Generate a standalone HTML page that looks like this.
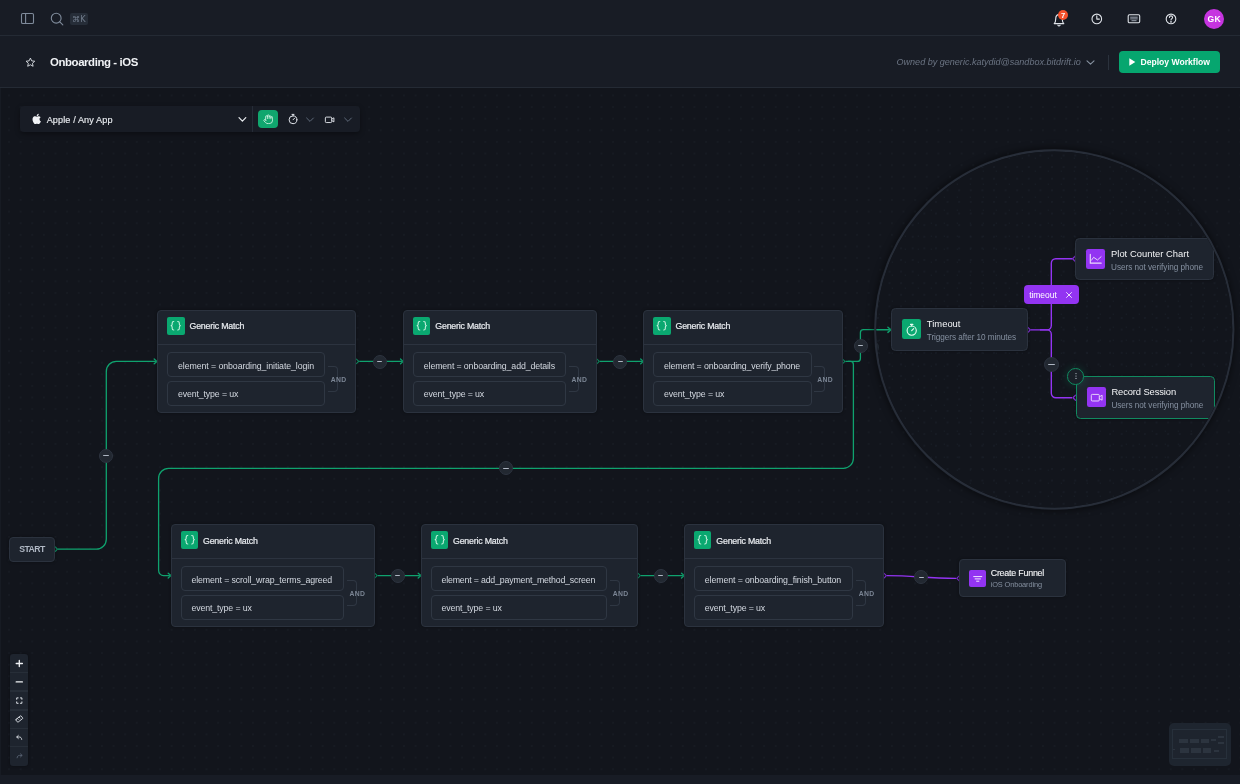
<!DOCTYPE html>
<html lang="en">
<head>
<meta charset="utf-8">
<title>Onboarding - iOS</title>
<style>
*{box-sizing:border-box;margin:0;padding:0}
html,body{width:1240px;height:784px;overflow:hidden;background:#12151c;font-family:"Liberation Sans",sans-serif;color:#e6e9ee}
.abs{position:absolute}
#topbar{position:absolute;left:0;top:0;width:1240px;height:36px;background:#181c25;border-bottom:1px solid #242a34}
#header{position:absolute;left:0;top:36px;width:1240px;height:52px;background:#181c25;border-bottom:1px solid #242a34}
#canvas{position:absolute;left:0;top:88px;width:1240px;height:687px;background-color:#12151c;
 overflow:hidden}
#bottom{position:absolute;left:0;top:775px;width:1240px;height:9px;background:#181c25}
.t{position:absolute;white-space:nowrap;line-height:1}
#topbar,#header,#scene{will-change:transform}
/* nodes */
.node{position:absolute;background:#1e242e;border:1px solid #2b323e;border-radius:4px;box-shadow:0 0 3px rgba(0,0,0,.4)}
.node .hd{position:absolute;left:0;right:0;top:0;height:34px;border-bottom:1px solid #2c333f}
.ico{position:absolute;border-radius:2px;background:#10a66e}
.ico.p{background:#9334f2}
.cond{position:absolute;border:1px solid #2f3743;border-radius:4px;background:#1e242e}
.title{position:absolute;white-space:nowrap;font-size:8.8px;line-height:10px;color:#e9ecf0}
.ctext{position:absolute;white-space:nowrap;font-size:8.8px;line-height:10px;color:#d5dae1}
.and{position:absolute;white-space:nowrap;font-size:6.6px;line-height:8px;font-weight:bold;color:#7b8594;letter-spacing:.2px}
.brk{position:absolute;border:1px solid #2f3743;border-left:none;border-radius:0 4px 4px 0}
.minus{position:absolute;width:14px;height:14px;border-radius:50%;background:#252c37;border:1px solid #2b323e}
.minus:after{content:"";position:absolute;left:3.5px;top:5.4px;width:5px;height:1.3px;background:#b4bcc8;border-radius:.5px}
</style>
</head>
<body>
<div id="topbar">
<svg class="abs" style="left:20px;top:12px" width="16" height="14" viewBox="0 0 16 14" fill="none" stroke="#7f8b9b" stroke-width="1.1"><rect x="1.5" y="1.5" width="12" height="10" rx="1.3"/><path d="M5.6 1.5v10"/></svg>
<svg class="abs" style="left:50px;top:12px" width="15" height="15" viewBox="0 0 15 15" fill="none" stroke="#7f8b9b" stroke-width="1.1" stroke-linecap="round"><circle cx="6.2" cy="6.2" r="4.9"/><path d="M9.8 9.8l3 3"/></svg>
<div class="abs" style="left:69.5px;top:12.5px;width:18.5px;height:12.5px;background:#262d38;border-radius:2px"></div>
<div class="t" style="left:72px;top:14.6px;font-size:8.2px;color:#6f7a8a;font-family:'DejaVu Sans','Liberation Sans',sans-serif">⌘K</div>
<svg class="abs" style="left:1051px;top:11px" width="18" height="18" viewBox="0 0 18 18" fill="none" stroke="#dfe3e9" stroke-width="1.15" stroke-linejoin="round" stroke-linecap="round"><path d="M3.2 12.6c1.1-1 1.5-2.2 1.5-4.6 0-2.6 1.4-4.4 3.3-4.4s3.300 1.8 3.300 4.400c0 2.400.4 3.600 1.500 4.600z"/><path d="M6.900 14.200c.3.500.700.700 1.100.7s.8-.2 1.100-.7"/></svg>
<div class="abs" style="left:1058px;top:10.300px;width:10px;height:10px;border-radius:50%;background:#f5512c"></div>
<div class="t" style="left:1060.900px;top:12.200px;font-size:7.600px;font-weight:bold;color:#fff">7</div>
<svg class="abs" style="left:1090px;top:12px" width="14" height="14" viewBox="0 0 14 14" fill="none" stroke="#dfe3e9" stroke-width="1.1" stroke-linecap="round" stroke-linejoin="round"><circle cx="6.800" cy="6.900" r="4.800"/><path d="M6.800 3.900v3.200h2.600"/></svg>
<svg class="abs" style="left:1126px;top:12px" width="16" height="14" viewBox="0 0 16 14" fill="none" stroke="#dfe3e9" stroke-width="1.100"><rect x="2.200" y="2.800" width="11.500" height="8" rx="1.200"/><path d="M4.200 5.200h7.500M4.200 6.900h7.500M5.500 8.700h5" stroke-width=".9" stroke="#aab2be"/></svg>
<svg class="abs" style="left:1164px;top:12px" width="14" height="14" viewBox="0 0 14 14" fill="none" stroke="#dfe3e9" stroke-width="1.100" stroke-linecap="round"><circle cx="7" cy="6.900" r="4.800"/><path d="M5.400 5.500c0-1 .7-1.600 1.600-1.600s1.600.6 1.600 1.500c0 1.100-1.600 1.300-1.600 2.500"/><circle cx="7" cy="9.800" r=".35" fill="#dfe3e9"/></svg>
<div class="abs" style="left:1204px;top:9px;width:20px;height:20px;border-radius:50%;background:#c634e0"></div>
<div class="t" style="left:1207.600px;top:14.600px;font-size:8.600px;font-weight:bold;color:#fff;letter-spacing:.2px">GK</div>
</div>
<div id="header">
<svg class="abs" style="left:25.1px;top:20.7px" width="10.8" height="10.8" viewBox="0 0 12 12" fill="none" stroke="#dfe3e9" stroke-width="1" stroke-linejoin="round"><path d="M6 1.200l1.450 3.100 3.350.4-2.500 2.300.7 3.300L6 8.650 3 10.300l.7-3.300-2.500-2.300 3.350-.4z"/></svg>
<div class="t" id="ttl" style="left:50px;top:20.6px;font-size:11.4px;letter-spacing:-.4px;font-weight:bold;color:#f1f3f6">Onboarding - iOS</div>
<div class="t" id="own" style="left:896.500px;top:22.2px;font-size:9.05px;font-style:italic;color:#6b7483">Owned by generic.katydid@sandbox.bitdrift.io</div>
<svg class="abs" style="left:1085px;top:22px" width="11" height="9" viewBox="0 0 11 9" fill="none" stroke="#8893a2" stroke-width="1.100" stroke-linecap="round" stroke-linejoin="round"><path d="M2 2.800l3.500 3.300L9 2.800"/></svg>
<div class="abs" style="left:1108px;top:19px;width:1px;height:14.5px;background:#2b323d"></div>
<div class="abs" style="left:1119px;top:15px;width:101px;height:22px;border-radius:4px;background:#06a66f"></div>
<svg class="abs" style="left:1128px;top:21px" width="9" height="10" viewBox="0 0 9 10"><path d="M1.300 1.200l6 3.800-6 3.800z" fill="#fff"/></svg>
<div class="t" id="dep" style="left:1140.500px;top:22.3px;font-size:8.6px;font-weight:bold;color:#fff">Deploy Workflow</div>
</div>
<div id="canvas"><svg width="1240" height="687" style="position:absolute;left:0;top:0"><defs><pattern id="dots" x="3.22" y="1.65" width="11.617" height="11.617" patternUnits="userSpaceOnUse"><circle cx="5.8085" cy="5.8085" r="0.62" fill="#1e242d"/></pattern></defs><rect width="1240" height="687" fill="url(#dots)"/></svg></div>
<div id="bottom"></div>
<div class="abs" style="left:0;top:88px;width:1px;height:687px;background:#171b23"></div>
<div id="scene" style="position:absolute;left:0;top:0;width:1240px;height:775px;overflow:hidden">
<!--EDGES-->
<svg class="abs" style="left:0;top:0" width="1240" height="775" viewBox="0 0 1240 775"><path d="M58 549.2H96.300a10 10 0 0 0 10-10V371.400a10 10 0 0 1 10-10H156.500" stroke="#0fa26e" stroke-width="1.3" fill="none"/>
<path d="M55.2 546.9L57.5 549.2L55.2 551.5" stroke="#0fa26e" stroke-width="1.1" fill="none" stroke-linecap="round" stroke-linejoin="round" opacity=".85"/>
<path d="M154.2 359.0L157.0 361.4L154.2 363.8" stroke="#0fa26e" stroke-width="1.3" fill="none" stroke-linecap="round" stroke-linejoin="round"/>
<path d="M359.2 361.4H402.8" stroke="#0fa26e" stroke-width="1.3" fill="none"/>
<path d="M356.4 359.1L358.7 361.4L356.4 363.7" stroke="#0fa26e" stroke-width="1.1" fill="none" stroke-linecap="round" stroke-linejoin="round" opacity=".85"/>
<path d="M400.5 359.0L403.3 361.4L400.5 363.8" stroke="#0fa26e" stroke-width="1.3" fill="none" stroke-linecap="round" stroke-linejoin="round"/>
<path d="M599.8 361.4H643.0" stroke="#0fa26e" stroke-width="1.3" fill="none"/>
<path d="M597.0 359.1L599.3 361.4L597.0 363.7" stroke="#0fa26e" stroke-width="1.1" fill="none" stroke-linecap="round" stroke-linejoin="round" opacity=".85"/>
<path d="M640.7 359.0L643.5 361.4L640.7 363.8" stroke="#0fa26e" stroke-width="1.3" fill="none" stroke-linecap="round" stroke-linejoin="round"/>
<path d="M842.6 359.1L844.9 361.4L842.6 363.7" stroke="#0fa26e" stroke-width="1.1" fill="none" stroke-linecap="round" stroke-linejoin="round" opacity=".85"/>
<path d="M845.400 361.4H857.400a3 3 0 0 0 3-3V332.700a3 3 0 0 1 3-3H880" stroke="#0fa26e" stroke-width="1.3" fill="none"/>
<path d="M848 361.4h2.400a3 3 0 0 1 3 3V458.300a10 10 0 0 1-10 10H168.600a10 10 0 0 0-10 10V570.600a5 5 0 0 0 5 5H170.500" stroke="#0fa26e" stroke-width="1.3" fill="none"/>
<path d="M168.2 573.2L171.0 575.6L168.2 578.0" stroke="#0fa26e" stroke-width="1.3" fill="none" stroke-linecap="round" stroke-linejoin="round"/>
<path d="M377.7 575.6H420.5" stroke="#0fa26e" stroke-width="1.3" fill="none"/>
<path d="M374.9 573.3L377.2 575.6L374.9 577.9" stroke="#0fa26e" stroke-width="1.1" fill="none" stroke-linecap="round" stroke-linejoin="round" opacity=".85"/>
<path d="M418.2 573.2L421.0 575.6L418.2 578.0" stroke="#0fa26e" stroke-width="1.3" fill="none" stroke-linecap="round" stroke-linejoin="round"/>
<path d="M640.9 575.6H683.8" stroke="#0fa26e" stroke-width="1.3" fill="none"/>
<path d="M638.1 573.3L640.4 575.6L638.1 577.9" stroke="#0fa26e" stroke-width="1.1" fill="none" stroke-linecap="round" stroke-linejoin="round" opacity=".85"/>
<path d="M681.5 573.2L684.3 575.6L681.5 578.0" stroke="#0fa26e" stroke-width="1.3" fill="none" stroke-linecap="round" stroke-linejoin="round"/>
<path d="M884.1 573.4L886.4 575.7L884.1 578.0" stroke="#9334f2" stroke-width="1.1" fill="none" stroke-linecap="round" stroke-linejoin="round" opacity=".85"/>
<path d="M886.900 575.700C915 575.700 925 578.400 956 578.400" stroke="#9334f2" stroke-width="1.3" fill="none"/>
<path d="M959.0 576.1L956.7 578.4L959.0 580.7" stroke="#9334f2" stroke-width="1.1" fill="none" stroke-linecap="round" stroke-linejoin="round" opacity=".85"/></svg>
<div class="abs" style="left:99.0px;top:448.5px;width:14px;height:14px;border-radius:50%;background:#222831;border:1px solid #2d3440"></div><div class="abs" style="left:103.30px;top:454.88px;width:5.40px;height:1.25px;background:#aeb6c2;border-radius:.4px"></div>
<div class="abs" style="left:372.7px;top:354.6px;width:14px;height:14px;border-radius:50%;background:#222831;border:1px solid #2d3440"></div><div class="abs" style="left:377.00px;top:360.98px;width:5.40px;height:1.25px;background:#aeb6c2;border-radius:.4px"></div>
<div class="abs" style="left:613.3px;top:354.6px;width:14px;height:14px;border-radius:50%;background:#222831;border:1px solid #2d3440"></div><div class="abs" style="left:617.60px;top:360.98px;width:5.40px;height:1.25px;background:#aeb6c2;border-radius:.4px"></div>
<div class="abs" style="left:853.5px;top:338.5px;width:14px;height:14px;border-radius:50%;background:#222831;border:1px solid #2d3440"></div><div class="abs" style="left:857.80px;top:344.88px;width:5.40px;height:1.25px;background:#aeb6c2;border-radius:.4px"></div>
<div class="abs" style="left:499.0px;top:461.4px;width:14px;height:14px;border-radius:50%;background:#222831;border:1px solid #2d3440"></div><div class="abs" style="left:503.30px;top:467.77px;width:5.40px;height:1.25px;background:#aeb6c2;border-radius:.4px"></div>
<div class="abs" style="left:390.8px;top:568.7px;width:14px;height:14px;border-radius:50%;background:#222831;border:1px solid #2d3440"></div><div class="abs" style="left:395.10px;top:575.08px;width:5.40px;height:1.25px;background:#aeb6c2;border-radius:.4px"></div>
<div class="abs" style="left:653.8px;top:568.7px;width:14px;height:14px;border-radius:50%;background:#222831;border:1px solid #2d3440"></div><div class="abs" style="left:658.10px;top:575.08px;width:5.40px;height:1.25px;background:#aeb6c2;border-radius:.4px"></div>
<div class="abs" style="left:914.3px;top:570.3px;width:14px;height:14px;border-radius:50%;background:#222831;border:1px solid #2d3440"></div><div class="abs" style="left:918.60px;top:576.67px;width:5.40px;height:1.25px;background:#aeb6c2;border-radius:.4px"></div>
<!--/EDGES-->
<!--NODES-->
<div class="node" style="left:9px;top:537px;width:46px;height:25.100px"></div>
<div class="t" style="left:19.3px;top:544.7px;font-size:8.7px;font-weight:bold;color:#b0b8c4;letter-spacing:-0.583px">START</div>
<div class="node" style="left:157.0px;top:309.7px;width:199.4px;height:103.5px"><div class="hd"></div></div>
<div class="ico" style="left:167.0px;top:317.3px;width:17.5px;height:17.5px;background:#0aa870"></div><svg class="abs" style="left:167.0px;top:317.3px" width="17.5" height="17.5" viewBox="0 0 24 24" fill="none" stroke="#c9f2e0" stroke-width="1.45" stroke-linecap="round" stroke-linejoin="round"><path d="M9.300 6.200c-1.600 0-2.200.700-2.200 2v1.900c0 1.100-.500 1.700-1.500 1.900 1 .200 1.500.800 1.500 1.900v1.900c0 1.300.600 2 2.200 2"/><path d="M14.700 6.200c1.600 0 2.200.700 2.200 2v1.900c0 1.100.500 1.700 1.500 1.900-1 .200-1.500.800-1.500 1.900v1.900c0 1.300-.600 2-2.200 2"/></svg>
<div class="t" style="left:189.5px;top:322.3px;font-size:8.8px;color:#e9ecf0;-webkit-text-stroke:.2px #e9ecf0;letter-spacing:-0.200px">Generic Match</div>
<div class="cond" style="left:167.0px;top:352.3px;width:158.1px;height:25px"></div>
<div class="t" style="left:178.0px;top:361.7px;font-size:8.8px;color:#d3d8e0;letter-spacing:-0.090px">element = onboarding_initiate_login</div>
<div class="cond" style="left:167.0px;top:380.6px;width:158.1px;height:25px"></div>
<div class="t" style="left:178.0px;top:389.8px;font-size:8.8px;color:#d3d8e0;letter-spacing:-0.144px">event_type = ux</div>
<div class="brk" style="left:327.9px;top:366.2px;width:10.500px;height:26px"></div>
<div class="t" style="left:330.7px;top:376.5px;font-size:6.800px;font-weight:bold;color:#7b8594;letter-spacing:0.355px">AND</div>
<div class="node" style="left:402.8px;top:309.7px;width:194.5px;height:103.5px"><div class="hd"></div></div>
<div class="ico" style="left:412.8px;top:317.3px;width:17.5px;height:17.5px;background:#0aa870"></div><svg class="abs" style="left:412.8px;top:317.3px" width="17.5" height="17.5" viewBox="0 0 24 24" fill="none" stroke="#c9f2e0" stroke-width="1.45" stroke-linecap="round" stroke-linejoin="round"><path d="M9.300 6.200c-1.600 0-2.200.700-2.200 2v1.900c0 1.100-.500 1.700-1.500 1.900 1 .200 1.500.800 1.500 1.900v1.900c0 1.300.600 2 2.200 2"/><path d="M14.700 6.200c1.600 0 2.200.700 2.200 2v1.900c0 1.100.500 1.700 1.500 1.900-1 .200-1.500.800-1.500 1.900v1.900c0 1.300-.600 2-2.200 2"/></svg>
<div class="t" style="left:435.3px;top:322.3px;font-size:8.8px;color:#e9ecf0;-webkit-text-stroke:.2px #e9ecf0;letter-spacing:-0.200px">Generic Match</div>
<div class="cond" style="left:412.8px;top:352.3px;width:153.2px;height:25px"></div>
<div class="t" style="left:423.8px;top:361.7px;font-size:8.8px;color:#d3d8e0;letter-spacing:-0.127px">element = onboarding_add_details</div>
<div class="cond" style="left:412.8px;top:380.6px;width:153.2px;height:25px"></div>
<div class="t" style="left:423.8px;top:389.8px;font-size:8.8px;color:#d3d8e0;letter-spacing:-0.144px">event_type = ux</div>
<div class="brk" style="left:568.8px;top:366.2px;width:10.500px;height:26px"></div>
<div class="t" style="left:571.5999999999999px;top:376.5px;font-size:6.800px;font-weight:bold;color:#7b8594;letter-spacing:0.355px">AND</div>
<div class="node" style="left:643.0px;top:309.7px;width:199.9px;height:103.5px"><div class="hd"></div></div>
<div class="ico" style="left:653.0px;top:317.3px;width:17.5px;height:17.5px;background:#0aa870"></div><svg class="abs" style="left:653.0px;top:317.3px" width="17.5" height="17.5" viewBox="0 0 24 24" fill="none" stroke="#c9f2e0" stroke-width="1.45" stroke-linecap="round" stroke-linejoin="round"><path d="M9.300 6.200c-1.600 0-2.200.700-2.200 2v1.900c0 1.100-.500 1.700-1.500 1.900 1 .200 1.500.800 1.500 1.900v1.900c0 1.300.600 2 2.200 2"/><path d="M14.700 6.200c1.600 0 2.200.700 2.200 2v1.900c0 1.100.500 1.700 1.500 1.900-1 .200-1.500.800-1.500 1.900v1.900c0 1.300-.600 2-2.200 2"/></svg>
<div class="t" style="left:675.5px;top:322.3px;font-size:8.8px;color:#e9ecf0;-webkit-text-stroke:.2px #e9ecf0;letter-spacing:-0.200px">Generic Match</div>
<div class="cond" style="left:653.0px;top:352.3px;width:158.6px;height:25px"></div>
<div class="t" style="left:664.0px;top:361.7px;font-size:8.8px;color:#d3d8e0;letter-spacing:-0.140px">element = onboarding_verify_phone</div>
<div class="cond" style="left:653.0px;top:380.6px;width:158.6px;height:25px"></div>
<div class="t" style="left:664.0px;top:389.8px;font-size:8.8px;color:#d3d8e0;letter-spacing:-0.144px">event_type = ux</div>
<div class="brk" style="left:814.4px;top:366.2px;width:10.500px;height:26px"></div>
<div class="t" style="left:817.1999999999999px;top:376.5px;font-size:6.800px;font-weight:bold;color:#7b8594;letter-spacing:0.355px">AND</div>
<div class="node" style="left:170.5px;top:523.8px;width:204.7px;height:103.5px"><div class="hd"></div></div>
<div class="ico" style="left:180.5px;top:531.4px;width:17.5px;height:17.5px;background:#0aa870"></div><svg class="abs" style="left:180.5px;top:531.4px" width="17.5" height="17.5" viewBox="0 0 24 24" fill="none" stroke="#c9f2e0" stroke-width="1.45" stroke-linecap="round" stroke-linejoin="round"><path d="M9.300 6.200c-1.600 0-2.200.700-2.200 2v1.900c0 1.100-.500 1.700-1.500 1.900 1 .200 1.500.800 1.500 1.900v1.900c0 1.300.600 2 2.200 2"/><path d="M14.700 6.200c1.600 0 2.200.700 2.200 2v1.900c0 1.100.500 1.700 1.500 1.900-1 .200-1.500.800-1.500 1.900v1.900c0 1.300-.600 2-2.200 2"/></svg>
<div class="t" style="left:203px;top:537.0px;font-size:8.8px;color:#e9ecf0;-webkit-text-stroke:.2px #e9ecf0;letter-spacing:-0.200px">Generic Match</div>
<div class="cond" style="left:180.5px;top:566.4px;width:163.4px;height:25px"></div>
<div class="t" style="left:191.5px;top:575.8px;font-size:8.8px;color:#d3d8e0;letter-spacing:-0.129px">element = scroll_wrap_terms_agreed</div>
<div class="cond" style="left:180.5px;top:594.7px;width:163.4px;height:25px"></div>
<div class="t" style="left:191.5px;top:603.8999999999999px;font-size:8.8px;color:#d3d8e0;letter-spacing:-0.144px">event_type = ux</div>
<div class="brk" style="left:346.7px;top:580.3px;width:10.500px;height:26px"></div>
<div class="t" style="left:349.5px;top:590.5999999999999px;font-size:6.800px;font-weight:bold;color:#7b8594;letter-spacing:0.355px">AND</div>
<div class="node" style="left:420.5px;top:523.8px;width:217.9px;height:103.5px"><div class="hd"></div></div>
<div class="ico" style="left:430.5px;top:531.4px;width:17.5px;height:17.5px;background:#0aa870"></div><svg class="abs" style="left:430.5px;top:531.4px" width="17.5" height="17.5" viewBox="0 0 24 24" fill="none" stroke="#c9f2e0" stroke-width="1.45" stroke-linecap="round" stroke-linejoin="round"><path d="M9.300 6.200c-1.600 0-2.200.700-2.200 2v1.900c0 1.100-.500 1.700-1.500 1.900 1 .200 1.500.800 1.500 1.900v1.900c0 1.300.600 2 2.200 2"/><path d="M14.700 6.200c1.600 0 2.200.700 2.200 2v1.900c0 1.100.500 1.700 1.500 1.900-1 .200-1.500.800-1.500 1.900v1.900c0 1.300-.600 2-2.200 2"/></svg>
<div class="t" style="left:453px;top:537.0px;font-size:8.8px;color:#e9ecf0;-webkit-text-stroke:.2px #e9ecf0;letter-spacing:-0.200px">Generic Match</div>
<div class="cond" style="left:430.5px;top:566.4px;width:176.6px;height:25px"></div>
<div class="t" style="left:441.5px;top:575.8px;font-size:8.8px;color:#d3d8e0;letter-spacing:-0.188px">element = add_payment_method_screen</div>
<div class="cond" style="left:430.5px;top:594.7px;width:176.6px;height:25px"></div>
<div class="t" style="left:441.5px;top:603.8999999999999px;font-size:8.8px;color:#d3d8e0;letter-spacing:-0.144px">event_type = ux</div>
<div class="brk" style="left:609.9px;top:580.3px;width:10.500px;height:26px"></div>
<div class="t" style="left:612.6999999999999px;top:590.5999999999999px;font-size:6.800px;font-weight:bold;color:#7b8594;letter-spacing:0.355px">AND</div>
<div class="node" style="left:683.8px;top:523.8px;width:200.6px;height:103.5px"><div class="hd"></div></div>
<div class="ico" style="left:693.8px;top:531.4px;width:17.5px;height:17.5px;background:#0aa870"></div><svg class="abs" style="left:693.8px;top:531.4px" width="17.5" height="17.5" viewBox="0 0 24 24" fill="none" stroke="#c9f2e0" stroke-width="1.45" stroke-linecap="round" stroke-linejoin="round"><path d="M9.300 6.200c-1.600 0-2.200.700-2.200 2v1.900c0 1.100-.500 1.700-1.500 1.900 1 .200 1.500.800 1.500 1.900v1.900c0 1.300.600 2 2.200 2"/><path d="M14.700 6.200c1.600 0 2.200.700 2.200 2v1.900c0 1.100.500 1.700 1.500 1.900-1 .200-1.500.800-1.500 1.900v1.900c0 1.300-.600 2-2.200 2"/></svg>
<div class="t" style="left:716.3px;top:537.0px;font-size:8.8px;color:#e9ecf0;-webkit-text-stroke:.2px #e9ecf0;letter-spacing:-0.200px">Generic Match</div>
<div class="cond" style="left:693.8px;top:566.4px;width:159.3px;height:25px"></div>
<div class="t" style="left:704.8px;top:575.8px;font-size:8.8px;color:#d3d8e0;letter-spacing:-0.112px">element = onboarding_finish_button</div>
<div class="cond" style="left:693.8px;top:594.7px;width:159.3px;height:25px"></div>
<div class="t" style="left:704.8px;top:603.8999999999999px;font-size:8.8px;color:#d3d8e0;letter-spacing:-0.144px">event_type = ux</div>
<div class="brk" style="left:855.9px;top:580.3px;width:10.500px;height:26px"></div>
<div class="t" style="left:858.6999999999999px;top:590.5999999999999px;font-size:6.800px;font-weight:bold;color:#7b8594;letter-spacing:0.355px">AND</div>
<div class="node" style="left:959.2px;top:559.4px;width:106.7px;height:37.8px"></div>
<div class="ico p" style="left:968.7px;top:569.6px;width:17.5px;height:17.5px"></div>
<svg class="abs" style="left:968.7px;top:569.6px" width="17.5" height="17.5" viewBox="0 0 17.5 17.5" stroke="#f3e8ff" stroke-width="1" stroke-linecap="round"><path d="M4.700 6.600h8.100M6.100 8.900h5.300M7.600 11.200h2.300"/></svg>
<div class="t" style="left:990.7px;top:568.9px;font-size:8.900px;color:#f4f5f7;-webkit-text-stroke:.12px #f4f5f7;letter-spacing:-0.219px">Create Funnel</div>
<div class="t" style="left:990.7px;top:581.4px;font-size:7.4px;color:#8590a0;letter-spacing:-0.129px">iOS Onboarding</div>
<!--/NODES-->
<!--LENS-->
<div class="abs" style="left:874.2px;top:149.4px;width:360.2px;height:360.2px;border-radius:50%;box-shadow:0 0 7px 1px rgba(0,0,0,.5)"></div><svg class="abs" style="left:0;top:0" width="1240" height="775"><circle cx="1054.3" cy="329.5" r="179.05" fill="#12151c" stroke="#272d38" stroke-width="2.200"/></svg><div id="lens" class="abs" style="left:876px;top:151px;width:358px;height:358px;clip-path:circle(178.0px at 178.3px 178.5px);background:radial-gradient(circle,#1c212b 0.450px,transparent 0.950px) 7.71px 10.31px/11.623px 11.623px,radial-gradient(circle,#1c212b 0.450px,transparent 0.950px) 9.80px 0.70px/13.0px 13.0px,#12151c"><svg class="abs" style="left:0;top:0" width="358" height="358"><path d="M-6 178.7H14.5" stroke="#0fa26e" stroke-width="1.4" fill="none"/>
<path d="M11.9 176.2L15.0 178.8L11.9 181.4" stroke="#0fa26e" stroke-width="1.4" fill="none" stroke-linecap="round" stroke-linejoin="round"/>
<path d="M151.9 176.4L154.4 178.89999999999998L151.9 181.4" stroke="#9334f2" stroke-width="1.3" fill="none" stroke-linecap="round" stroke-linejoin="round" opacity=".85"/>
<path d="M155 178.89999999999998H171a4.300 4.300 0 0 0 4.300-4.300V112.19999999999999a4.500 4.500 0 0 1 4.500-4.500H196" stroke="#9334f2" stroke-width="1.4" fill="none"/>
<path d="M164 178.89999999999998H171a4.300 4.300 0 0 1 4.300 4.300V242.2a4.500 4.500 0 0 0 4.500 4.500H196" stroke="#9334f2" stroke-width="1.4" fill="none"/>
<path d="M199.1 105.2L196.6 107.69999999999999L199.1 110.2" stroke="#9334f2" stroke-width="1.3" fill="none" stroke-linecap="round" stroke-linejoin="round" opacity=".85"/>
<path d="M199.5 244.2L197.0 246.7L199.5 249.2" stroke="#9334f2" stroke-width="1.3" fill="none" stroke-linecap="round" stroke-linejoin="round" opacity=".85"/></svg>
<div class="node" style="left:15.1px;top:157.4px;width:136.6px;height:42.4px;border-radius:4.500px;"></div>
<div class="ico" style="left:25.9px;top:168.2px;width:19.400px;height:19.800px;background:#0aa870;border-radius:2.200px"></div>
<div class="t" style="left:50.8px;top:167.8px;font-size:9.400px;color:#f4f5f7;letter-spacing:0.024px">Timeout</div>
<div class="t" style="left:50.8px;top:183.0px;font-size:8.200px;color:#8590a0;letter-spacing:-0.057px">Triggers after 10 minutes</div>
<div class="node" style="left:199.3px;top:87.3px;width:138.7px;height:42.1px;border-radius:4.500px;"></div>
<div class="ico" style="left:210.1px;top:98.1px;width:19.400px;height:19.800px;background:#9334f2;border-radius:2.200px"></div>
<div class="t" style="left:235.0px;top:97.7px;font-size:9.400px;color:#f4f5f7;letter-spacing:0.025px">Plot Counter Chart</div>
<div class="t" style="left:235.0px;top:112.9px;font-size:8.200px;color:#8590a0;letter-spacing:-0.030px">Users not verifying phone</div>
<div class="node" style="left:199.7px;top:225.4px;width:138.9px;height:42.8px;border-radius:4.500px;border:1.300px solid #118a60;"></div>
<div class="ico" style="left:210.5px;top:236.2px;width:19.400px;height:19.800px;background:#9334f2;border-radius:2.200px"></div>
<div class="t" style="left:235.4px;top:235.8px;font-size:9.400px;color:#f4f5f7;letter-spacing:-0.113px">Record Session</div>
<div class="t" style="left:235.4px;top:251.0px;font-size:8.200px;color:#8590a0;letter-spacing:-0.038px">Users not verifying phone</div>
<svg class="abs" style="left:26.0px;top:169.0px" width="19.400" height="19.400" viewBox="0 0 19.400 19.400" fill="none" stroke="#e8fff4" stroke-width="1.100" stroke-linecap="round"><circle cx="9.700" cy="10.600" r="4.600"/><path d="M8.500 4.400h2.400M9.700 4.500v1.500M9.700 10.600l2-2"/></svg>
<svg class="abs" style="left:209.9px;top:98.3px" width="19.400" height="19.400" viewBox="0 0 19.400 19.400" fill="none" stroke="#ead9fb" stroke-width=".95" stroke-linecap="round" stroke-linejoin="round"><path d="M4.300 5.400v8.800h10.900" stroke-width="1.150"/><path d="M5.500 11.200l2.100-2.900 3.900 2.700 3.600-3.300"/></svg>
<svg class="abs" style="left:210.6px;top:237.0px" width="19.400" height="19.400" viewBox="0 0 19.400 19.400" fill="none" stroke="#ead9fb" stroke-width=".95" stroke-linejoin="round"><rect x="4.300" y="6.400" width="8" height="6.600" rx="1"/><path d="M12.300 8.900l2.800-1.700v5l-2.800-1.700"/></svg>
<div class="abs" style="left:147.8px;top:134.0px;width:55px;height:19px;border-radius:4px;background:#9334f2"></div>
<div class="t" style="left:153.2px;top:139.8px;font-size:8.500px;color:#fff;letter-spacing:-0.054px">timeout</div>
<svg class="abs" style="left:188.5px;top:139.7px" width="8" height="8" viewBox="0 0 8 8" stroke="#f3e8ff" stroke-width=".9" stroke-linecap="round"><path d="M1.500 1.500l5 5M6.500 1.500l-5 5"/></svg>
<div class="abs" style="left:167.8px;top:205.6px;width:15.4px;height:15.4px;border-radius:50%;background:#222831;border:1px solid #2d3440"></div><div class="abs" style="left:172.2px;top:212.7px;width:6.70px;height:1.15px;background:#aeb6c2;border-radius:.4px"></div>
<div class="abs" style="left:-12.7px;top:188.6px;width:15.400px;height:15.400px;border-radius:50%;background:#222932"></div>
<div class="abs" style="left:191.2px;top:217.0px;width:16.600px;height:16.600px;border-radius:50%;background:#1a2028;border:1.300px solid #118a60;box-shadow:0 0 8px rgba(16,167,113,.25)"></div>
<svg class="abs" style="left:195.5px;top:221.3px" width="8" height="8" viewBox="0 0 8 8" fill="#c9d0da"><circle cx="4" cy="1.600" r=".55"/><circle cx="4" cy="4" r=".55"/><circle cx="4" cy="6.400" r=".55"/></svg></div>
<!--/LENS-->
<!-- toolbar -->
<div class="abs" style="left:19.5px;top:106px;width:340px;height:26px;border-radius:4px;background:#181c25;box-shadow:0 2px 5px rgba(0,0,0,.35)"></div>
<div class="abs" style="left:252px;top:106px;width:1px;height:26px;background:#262c37"></div>
<svg class="abs" style="left:31px;top:113px" width="12" height="12" viewBox="0 0 24 24"><path fill="#f1f3f6" d="M17.05 12.54c-.03-2.6 2.130-3.860 2.230-3.920-1.220-1.770-3.110-2.020-3.780-2.040-1.590-.17-3.130.95-3.940.95-.83 0-2.070-.93-3.410-.9-1.730.03-3.350 1.030-4.240 2.590-1.830 3.170-.47 7.840 1.290 10.400.88 1.260 1.900 2.660 3.250 2.610 1.310-.05 1.810-.84 3.390-.84 1.570 0 2.030.84 3.400.81 1.410-.02 2.300-1.260 3.150-2.530 1.010-1.440 1.420-2.860 1.440-2.930-.03-.01-2.750-1.050-2.780-4.200zM14.460 4.870c.71-.88 1.190-2.080 1.060-3.300-1.020.05-2.300.71-3.040 1.570-.65.760-1.230 2-1.080 3.170 1.150.09 2.330-.58 3.060-1.440z"/></svg>
<div class="t" id="app" style="left:46.7px;top:115.500px;font-size:9.100px;letter-spacing:.11px;-webkit-text-stroke:.15px #e9ecf0;color:#e9ecf0">Apple / Any App</div>
<svg class="abs" style="left:237px;top:115px" width="11" height="9" viewBox="0 0 11 9" fill="none" stroke="#e9ecf0" stroke-width="1.2" stroke-linecap="round" stroke-linejoin="round"><path d="M2 2.600l3.400 3.600 3.400-3.600"/></svg>
<div class="abs" style="left:258px;top:109.700px;width:19.800px;height:18.600px;border-radius:4px;background:#10a66e"></div>
<svg class="abs" style="left:262.800px;top:113.700px" width="10.500" height="10.500" viewBox="0 0 24 24" fill="none" stroke="#d9f5e8" stroke-width="1.900" stroke-linecap="round" stroke-linejoin="round"><path d="M18 11V6a2 2 0 0 0-4 0"/><path d="M14 10V4a2 2 0 0 0-4 0v2"/><path d="M10 10.500V6a2 2 0 0 0-4 0v8"/><path d="M18 8a2 2 0 1 1 4 0v6a8 8 0 0 1-8 8h-2c-2.800 0-4.500-.860-5.990-2.340l-3.600-3.600a2 2 0 0 1 2.830-2.820L7 15"/></svg>
<svg class="abs" style="left:286.600px;top:113px" width="12" height="12" viewBox="0 0 12 12" fill="none" stroke="#dfe3e9" stroke-width="1" stroke-linecap="round"><circle cx="6" cy="6.800" r="3.900"/><path d="M5 1.400h2M6 1.500v1.400M6 6.800l1.700-1.700"/></svg>
<svg class="abs" style="left:305px;top:116px" width="10" height="8" viewBox="0 0 10 8" fill="none" stroke="#5f6a7a" stroke-width="1" stroke-linecap="round" stroke-linejoin="round"><path d="M1.600 2l3.400 3.400L8.400 2"/></svg>
<svg class="abs" style="left:324.300px;top:114.600px" width="11.800" height="10" viewBox="0 0 13 11" fill="none" stroke="#dfe3e9" stroke-width="1.050" stroke-linejoin="round"><rect x="1.500" y="2.300" width="7" height="6" rx="1"/><path d="M8.500 4.600l2.400-1.500v4.500L8.500 6.100"/></svg>
<svg class="abs" style="left:342.500px;top:116px" width="10" height="8" viewBox="0 0 10 8" fill="none" stroke="#5f6a7a" stroke-width="1" stroke-linecap="round" stroke-linejoin="round"><path d="M1.600 2l3.400 3.400L8.400 2"/></svg>
<!--CONTROLS-->
<div class="abs" style="left:10px;top:654.300px;width:18px;height:111.500px;border-radius:3px;background:#1e242e;box-shadow:0 0 3px rgba(0,0,0,.4)"></div>
<div class="abs" style="left:10px;top:671.95px;width:18px;height:1.500px;background:#272e38"></div>
<div class="abs" style="left:10px;top:690.25px;width:18px;height:1.500px;background:#272e38"></div>
<div class="abs" style="left:10px;top:709.05px;width:18px;height:1.500px;background:#272e38"></div>
<div class="abs" style="left:10px;top:727.65px;width:18px;height:1.500px;background:#272e38"></div>
<div class="abs" style="left:10px;top:745.75px;width:18px;height:1.500px;background:#272e38"></div>
<svg class="abs" style="left:10px;top:654px" width="19" height="112" viewBox="0 0 19 112" fill="none" stroke="#f1f3f6" stroke-linecap="round" stroke-linejoin="round"><path d="M6.200 9.500h6.200M9.300 6.400v6.200" stroke-width="1.300"/><path d="M6.200 27.900h6.200" stroke-width="1.300"/><path d="M6.700 45.300v-1.400h1.400M10.500 43.900h1.400v1.400M11.900 47.900v1.400h-1.400M8.100 49.300H6.700v-1.400" stroke-width="1" stroke="#dfe3e9"/><g transform="rotate(-38 9.300 65)"><rect x="6" y="63.300" width="6.600" height="3.400" rx=".6" stroke-width=".85" stroke="#dfe3e9"/><path d="M8.200 63.500v1.200M10.400 63.500v1.200" stroke-width=".7" stroke="#dfe3e9"/></g><path d="M8.300 81.500l-1.600 1.500 1.600 1.500M6.900 83h2.400c1.400 0 2.200.9 2.400 2.400" stroke-width=".9" stroke="#dfe3e9"/><path d="M10.500 99.900l1.600 1.500-1.600 1.500M11.900 101.400H9.500c-1.400 0-2.200.9-2.400 2.400" stroke-width=".9" stroke="#596373"/></svg>
<div class="abs" style="left:1168.700px;top:722.500px;width:62.200px;height:43.100px;border-radius:5px;background:#1e252f"></div>
<div class="abs" style="left:1172px;top:728.700px;width:55.400px;height:30.800px;border:1px solid #27303b;background:#1e242e"></div>
<div class="abs" style="left:1179.4px;top:738.9px;width:8.6px;height:4.3px;background:#2c343f"></div>
<div class="abs" style="left:1190.1px;top:738.9px;width:8.6px;height:4.3px;background:#2c343f"></div>
<div class="abs" style="left:1200.8px;top:738.9px;width:8.7px;height:4.3px;background:#2c343f"></div>
<div class="abs" style="left:1211px;top:738.9px;width:5.3px;height:2px;background:#2c343f"></div>
<div class="abs" style="left:1218px;top:736.1px;width:5.8px;height:2px;background:#2c343f"></div>
<div class="abs" style="left:1218px;top:741.6px;width:5.8px;height:2px;background:#2c343f"></div>
<div class="abs" style="left:1180px;top:748.4px;width:9.1px;height:4.3px;background:#2c343f"></div>
<div class="abs" style="left:1191.1px;top:748.4px;width:9.5px;height:4.3px;background:#2c343f"></div>
<div class="abs" style="left:1202.5px;top:748.4px;width:8.5px;height:4.3px;background:#2c343f"></div>
<div class="abs" style="left:1214.3px;top:749.8px;width:5px;height:1.8px;background:#2c343f"></div>
<div class="abs" style="left:1172.7px;top:749px;width:2.1px;height:1.2px;background:#2c343f"></div>
<!--/CONTROLS-->
</div>
</body>
</html>
